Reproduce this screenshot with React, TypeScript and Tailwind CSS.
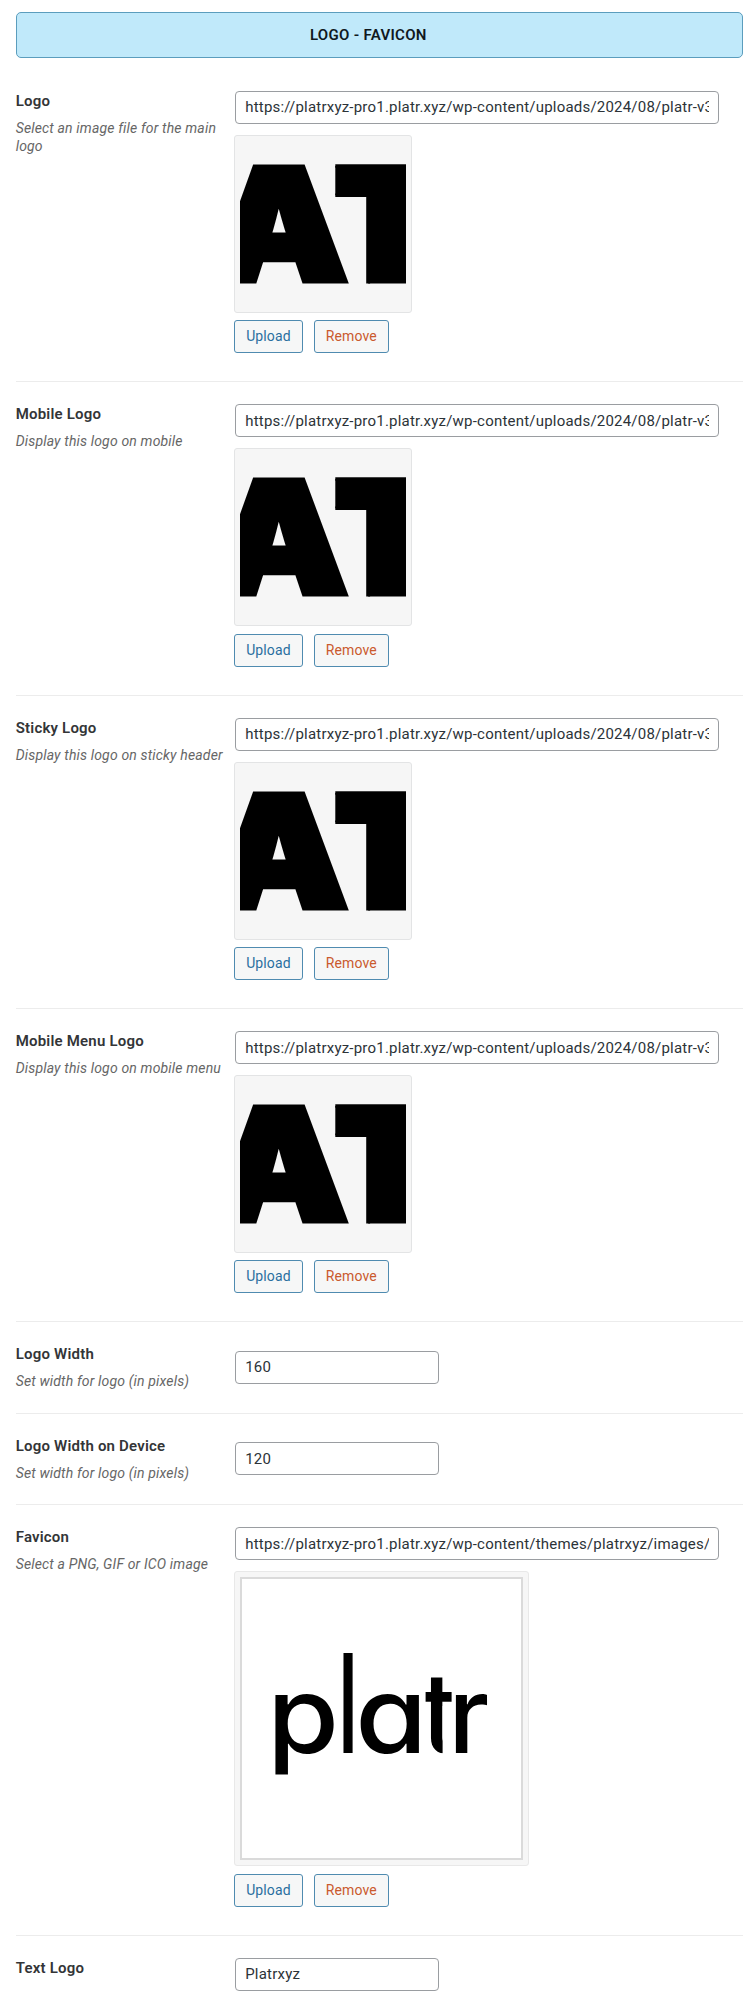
import React from "react";

const LOGO_URL =
  "https://platrxyz-pro1.platr.xyz/wp-content/uploads/2024/08/platr-v3-logo.png";
const FAVICON_URL =
  "https://platrxyz-pro1.platr.xyz/wp-content/themes/platrxyz/images/";

function TextField({ value, wide = false }: { value: string; wide?: boolean }) {
  return (
    <input
      type="text"
      defaultValue={value}
      className={`ml-px block h-[33px] rounded-[4px] border border-[#9a9da1] bg-white px-[9px] text-[15px] tracking-[0.21px] text-[#2c3338] outline-none ${
        wide ? "w-[483.5px]" : "w-[203.5px]"
      }`}
    />
  );
}

function Buttons() {
  return (
    <div className="mt-[7.3px] flex gap-[11px] text-[14px] tracking-[0.12px]">
      <button className="h-[33px] w-[68.5px] rounded-[3px] border border-[#4f8bb0] bg-[#f6f7f7] pb-[1px] leading-[30px] text-[#2a6f9f]">
        Upload
      </button>
      <button className="h-[33px] w-[75.3px] rounded-[3px] border border-[#4f8bb0] bg-[#f6f7f7] pb-[1px] leading-[30px] text-[#ca5a2e]">
        Remove
      </button>
    </div>
  );
}

function LogoPreview({ id }: { id: string }) {
  return (
    <div className="mt-[11px] h-[178px] w-[178px] rounded-[3px] border border-[#e3e4e5] bg-[#f6f6f6] p-[5px]">
      <svg width="166" height="166" viewBox="0 0 166 166" className="block overflow-hidden">
        <clipPath id={id}>
          <rect x="95.3" y="23" width="71" height="119.5" />
        </clipPath>
        <g fontFamily="Inter" fontWeight="900">
          <text transform="translate(-28 139) scale(1.105 1)" fontSize="154" stroke="#000" strokeWidth="7">
            A
          </text>
          <g clipPath={`url(#${id})`}>
            <text transform="translate(77.3 158.7) scale(1.3 1.15)" fontSize="160" stroke="#000" strokeWidth="3">
              T
            </text>
          </g>
        </g>
      </svg>
    </div>
  );
}

function FaviconPreview() {
  return (
    <div className="mt-[11px] h-[295px] w-[295px] rounded-[3px] border border-[#e8e8e8] bg-[#f6f6f6] p-[5px]">
      <svg width="283" height="283" viewBox="0 0 279 279" className="block border-2 border-[#dadada] bg-white">
        <clipPath id="crossbar">
          <path d="M183.6 60H209.6V127H200.6V174.3H183.6Z" />
        </clipPath>
        <g fontFamily="Inter" fontSize="106" fontWeight="450" style={{ fontFeatureSettings: '"cv11"' }}>
          <text transform="translate(25 174.3) scale(1.1 1)">p</text>
          <text x="90" y="174.3" fontSize="137.5" fontWeight="350">l</text>
          <text transform="translate(113.2 174.3) scale(1.1 1)">a</text>
          <g clipPath="url(#crossbar)">
            <text transform="translate(179.6 174.3) scale(1 1.05)">t</text>
          </g>
          <text x="206.3" y="174.3">r</text>
        </g>
      </svg>
    </div>
  );
}

interface RowProps {
  title: string;
  hint?: string;
  height: string;
  fieldTop?: string;
  last?: boolean;
  children: React.ReactNode;
}

function Row({ title, hint, height, fieldTop = "pt-[22px]", last, children }: RowProps) {
  return (
    <section className={`flex ${height} ${last ? "" : "border-b border-[#ececec]"}`}>
      <div className="w-[218.5px] shrink-0 pt-[22px]">
        <h3 className="text-[15px] leading-[20px] font-semibold tracking-[0.2px] text-[#333537]">{title}</h3>
        {hint && (
          <p className="mt-[8px] w-[212px] text-[14px] leading-[18.3px] tracking-[0.16px] text-[#666] italic">
            {hint}
          </p>
        )}
      </div>
      <div className={fieldTop}>{children}</div>
    </section>
  );
}

const LOGOS = [
  { id: "main", title: "Logo", hint: "Select an image file for the main logo" },
  { id: "mobile", title: "Mobile Logo", hint: "Display this logo on mobile" },
  { id: "sticky", title: "Sticky Logo", hint: "Display this logo on sticky header" },
  { id: "menu", title: "Mobile Menu Logo", hint: "Display this logo on mobile menu" },
];

export default function App() {
  return (
    <main className="h-[2005px] w-[756px] overflow-hidden bg-white pt-[12px] pr-[13px] pl-[15.7px] font-[Roboto,sans-serif]">
      <h2 className="mb-[10.9px] h-[46px] rounded-[5px] border border-[#5b9dbd] bg-[#c0e9fa] pr-[22px] text-center text-[15px] leading-[44px] font-semibold tracking-[0.3px] text-[#10191e]">
        LOGO - FAVICON
      </h2>
      {LOGOS.map((l) => (
        <Row key={l.id} title={l.title} hint={l.hint} height="h-[313.4px]">
          <TextField value={LOGO_URL} wide />
          <LogoPreview id={l.id} />
          <Buttons />
        </Row>
      ))}
      <Row title="Logo Width" hint="Set width for logo (in pixels)" height="h-[91.5px]" fieldTop="pt-[28.5px]">
        <TextField value="160" />
      </Row>
      <Row title="Logo Width on Device" hint="Set width for logo (in pixels)" height="h-[91.5px]" fieldTop="pt-[28.5px]">
        <TextField value="120" />
      </Row>
      <Row title="Favicon" hint="Select a PNG, GIF or ICO image" height="h-[430.7px]">
        <TextField value={FAVICON_URL} wide />
        <FaviconPreview />
        <Buttons />
      </Row>
      <Row title="Text Logo" height="h-[69px]" fieldTop="pt-[21.5px]" last>
        <TextField value="Platrxyz" />
      </Row>
    </main>
  );
}
